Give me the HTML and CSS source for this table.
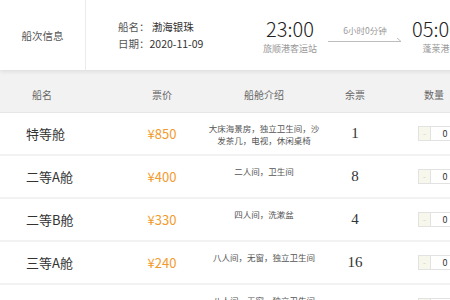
FILE: index.html
```html
<!DOCTYPE html>
<html lang="zh-CN">
<head>
<meta charset="utf-8">
<link rel="stylesheet" href="styles.css">
</head>
<body>
<div class="page">
  <div class="trip">
    <div class="trip-label">船次信息</div>
    <div class="ship-info">
      <div><span class="k">船名：</span> <span class="v">渤海银珠</span></div>
      <div><span class="k">日期：</span><span class="v">2020-11-09</span></div>
    </div>
    <div class="stop dep">
      <div class="time">23:00</div>
      <div class="port">旅顺港客运站</div>
    </div>
    <div class="duration">
      <div class="dur-text">6小时0分钟</div>
      <svg class="dur-line" width="74" height="6" viewBox="0 0 74 6"><path d="M0 5.5H73L69 2" fill="none" stroke="#bdbdbd" stroke-width="1"/></svg>
    </div>
    <div class="stop arr">
      <div class="time">05:00</div>
      <div class="port">蓬莱港</div>
    </div>
  </div>

  <div class="table">
    <div class="head">
      <div class="h-name">船名</div>
      <div class="h-cell">票价</div>
      <div class="h-cell">船舱介绍</div>
      <div class="h-cell">余票</div>
      <div class="h-cell">数量</div>
    </div>
    <div class="row">
      <div class="c-name">特等舱</div>
      <div class="c-price">¥850</div>
      <div class="c-desc">大床海景房，独立卫生间，沙发茶几，电视，休闲桌椅</div>
      <div class="c-left">1</div>
      <div class="c-qty"><div class="stepper"><span class="minus">-</span><span class="num">0</span></div></div>
    </div>
    <div class="row">
      <div class="c-name">二等A舱</div>
      <div class="c-price">¥400</div>
      <div class="c-desc">二人间，卫生间</div>
      <div class="c-left">8</div>
      <div class="c-qty"><div class="stepper"><span class="minus">-</span><span class="num">0</span></div></div>
    </div>
    <div class="row">
      <div class="c-name">二等B舱</div>
      <div class="c-price">¥330</div>
      <div class="c-desc">四人间，洗漱盆</div>
      <div class="c-left">4</div>
      <div class="c-qty"><div class="stepper"><span class="minus">-</span><span class="num">0</span></div></div>
    </div>
    <div class="row">
      <div class="c-name">三等A舱</div>
      <div class="c-price">¥240</div>
      <div class="c-desc">八人间，无窗，独立卫生间</div>
      <div class="c-left">16</div>
      <div class="c-qty"><div class="stepper"><span class="minus">-</span><span class="num">0</span></div></div>
    </div>
    <div class="row">
      <div class="c-name">三等B舱</div>
      <div class="c-price">¥220</div>
      <div class="c-desc">八人间，无窗，独立卫生间</div>
      <div class="c-left">12</div>
      <div class="c-qty"><div class="stepper"><span class="minus">-</span><span class="num">0</span></div></div>
    </div>
  </div>
</div>
</body>
</html>
```

FILE: styles.css
```css
html, body {
  margin: 0;
  padding: 0;
  background: #f2f2f2;
  overflow: hidden;
}
body {
  font-family: "Noto Sans CJK SC", "Noto Sans", sans-serif;
  color: #333;
}
.page {
  width: 480px;
}
.trip {
  display: flex;
  align-items: center;
  height: 70px;
  background: #fff;
  box-shadow: 0 2px 4px rgba(0, 0, 0, 0.08);
  position: relative;
}
.trip-label {
  width: 86px;
  height: 100%;
  border-right: 1px solid #ececec;
  box-sizing: border-box;
  display: flex;
  align-items: center;
  justify-content: center;
  font-size: 10.5px;
  color: #555;
}
.ship-info {
  margin-left: 32px;
  width: 144px;
  font-size: 10.5px;
  line-height: 17px;
  margin-top: -1px;
}
.ship-info .k { color: #555; }
.ship-info .v { color: #333; }
.stop {
  display: flex;
  flex-direction: column;
  align-items: center;
  margin-top: 3px;
}
.dep { width: 56px; }
.arr { width: 52px; margin-left: 8px; }
.time {
  font-size: 20px;
  line-height: 22px;
  color: #222;
  font-weight: 300;
}
.port {
  font-size: 9px;
  line-height: 12px;
  color: #999;
  margin-top: 3px;
  white-space: nowrap;
}
.duration {
  margin-left: 10px;
  width: 74px;
  display: flex;
  flex-direction: column;
  align-items: center;
  margin-top: -4px;
}
.dur-text {
  font-size: 8.5px;
  line-height: 12px;
  color: #999;
}
.dur-line {
  display: block;
}
.table {
  margin-top: 10px;
}
.head,
.row {
  display: grid;
  grid-template-columns: 118px 88px 116px 66px 92px;
  align-items: center;
}
.head {
  height: 29px;
  padding-bottom: 3px;
  background: #f2f2f2;
  border-bottom: 1px solid #e6e6e6;
  font-size: 10px;
  color: #666;
}
.h-name { padding-left: 32px; }
.h-cell { text-align: center; }
.row {
  height: 41px;
  background: #fff;
  margin-bottom: 2px;
}
.c-name {
  padding-left: 26px;
  font-size: 13px;
  color: #333;
}
.c-price {
  text-align: center;
  font-size: 13px;
  color: #f29b2d;
}
.c-desc {
  align-self: start;
  padding-top: 9px;
  text-align: center;
  font-size: 8.5px;
  line-height: 12px;
  color: #555;
}
.c-left {
  text-align: center;
  font-family: "Liberation Serif", serif;
  font-size: 15px;
  color: #333;
}
.stepper {
  display: flex;
  margin-left: 30px;
  height: 15px;
  border: 1px solid #e2e2e2;
  box-sizing: border-box;
  width: 60px;
  background: #fff;
}
.minus {
  width: 11px;
  background: #f7f7ec;
  border-right: 1px solid #e2e2e2;
  color: #ccc;
  font-size: 8px;
  line-height: 13px;
  text-align: center;
}
.num {
  width: 28px;
  text-align: center;
  font-size: 9px;
  line-height: 13px;
  color: #333;
}
```
